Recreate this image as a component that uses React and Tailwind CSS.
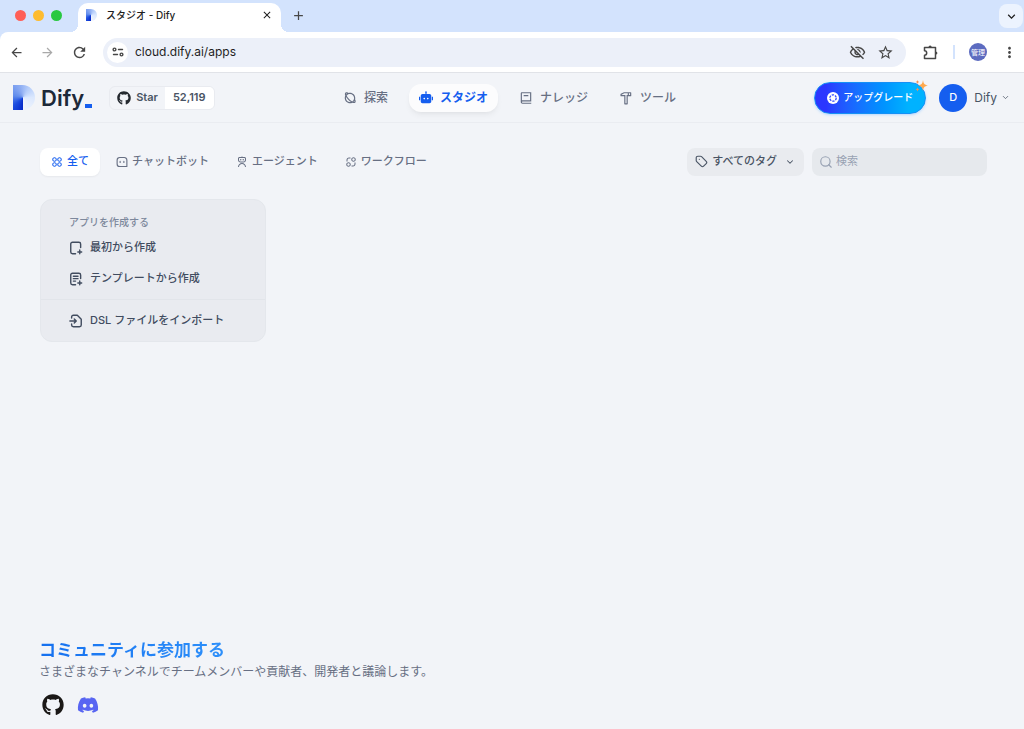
// src/App.jsx
import React, { useState } from "react";
import {
  MdArrowBack, MdArrowForward, MdRefresh, MdClose, MdAdd, MdKeyboardArrowDown,
  MdOutlineVisibilityOff, MdStarBorder, MdMoreVert,
} from "react-icons/md";
import { RiPlanetLine, RiRobot2Fill, RiBook2Line, RiHammerLine, RiApps2Line, RiRobot3Line, RiExchange2Line } from "react-icons/ri";
import { FaGithub, FaDiscord } from "react-icons/fa";
import { ChevronDown, Search } from "lucide-react";

const navItems = [
  { key: "explore", label: "探索", Icon: RiPlanetLine },
  { key: "studio", label: "スタジオ", Icon: RiRobot2Fill },
  { key: "datasets", label: "ナレッジ", Icon: RiBook2Line },
  { key: "tools", label: "ツール", Icon: RiHammerLine },
];

const tabs = [
  { key: "all", label: "全て", Icon: RiApps2Line },
  { key: "chat", label: "チャットボット", Icon: ChatIcon },
  { key: "agent", label: "エージェント", Icon: RiRobot3Line },
  { key: "workflow", label: "ワークフロー", Icon: RiExchange2Line },
];

export default function App() {
  return (
    <div className="flex min-h-screen flex-col bg-[#f2f4f8] font-['Inter','Noto_Sans_CJK_JP',sans-serif] text-[#495464]">
      <BrowserBar />
      <Header />
      <Apps />
      <Community />
    </div>
  );
}

function BrowserBar() {
  return (
    <div className="bg-[#d3e3fd] text-[#474747]">
      <div className="flex h-8 items-center">
        <div className="flex w-[78px] shrink-0 gap-[7px] pb-[2px] pl-[15px]">
          <span className="size-[11px] rounded-full bg-[#ff5f57]" />
          <span className="size-[11px] rounded-full bg-[#febc2e]" />
          <span className="size-[11px] rounded-full bg-[#28c840]" />
        </div>
        <div className="relative mt-[3px] flex h-[29px] w-[203px] items-center rounded-t-[10px] bg-white pb-[5px] pl-2 pr-2 text-[#1f1f1f]">
          <span className="absolute -left-2 bottom-0 size-2 bg-[radial-gradient(circle_at_0_0,#d3e3fd_8px,white_8px)]" />
          <span className="absolute -right-2 bottom-0 size-2 bg-[radial-gradient(circle_at_100%_0,#d3e3fd_8px,white_8px)]" />
          <LogoMark className="h-3 w-[11px]" />
          <span className="ml-[9px] flex-1 text-[10px] font-medium">スタジオ - Dify</span>
          <button aria-label="閉じる"><MdClose size={12} /></button>
        </div>
        <button aria-label="新しいタブ" className="ml-[10px] pb-[2px]"><MdAdd size={15} /></button>
        <button aria-label="タブを検索" className="ml-auto mr-[1px] flex size-6 items-center justify-center rounded-lg bg-[#ecf3fe] text-[#1f1f1f]">
          <MdKeyboardArrowDown size={15} />
        </button>
      </div>
      <div className="flex h-[41px] items-center rounded-tl-lg border-b border-[#e1e3e8] bg-white pl-[9px] pr-[6px]">
        <button aria-label="戻る"><MdArrowBack size={15} /></button>
        <button aria-label="進む" className="ml-4 text-[#a9a9a9]"><MdArrowForward size={15} /></button>
        <button aria-label="再読み込み" className="ml-4"><MdRefresh size={17} /></button>
        <div className="ml-[15px] flex h-[29px] flex-1 items-center rounded-full bg-[#ecf0f9] px-1">
          <span className="flex size-[21px] items-center justify-center rounded-full bg-white"><TuneIcon /></span>
          <input aria-label="アドレス" defaultValue="cloud.dify.ai/apps" className="ml-[7px] min-w-0 flex-1 bg-transparent text-[12px] text-[#1f1f1f] outline-none" />
          <button aria-label="Cookie"><MdOutlineVisibilityOff size={17} /></button>
          <button aria-label="ブックマーク" className="ml-[11px] mr-2"><MdStarBorder size={17} /></button>
        </div>
        <button aria-label="拡張機能" className="ml-4"><ExtensionIcon /></button>
        <span className="ml-[14px] h-[14px] w-[2px] bg-[#d3e3fd]" />
        <button className="ml-[14px] size-[18px] rounded-full bg-[#5c6bc0] text-[7px] leading-none text-white">管理</button>
        <button aria-label="メニュー" className="ml-[14px]"><MdMoreVert size={17} /></button>
      </div>
    </div>
  );
}

function Header() {
  const [active, setActive] = useState("studio");

  return (
    <header className="flex h-[50px] items-center border-b border-[#eaecf1] pl-[13px] pr-[14px]">
      <div className="flex flex-1 items-center">
        <a href="#" aria-label="Dify" className="flex items-center">
          <LogoMark className="h-[25px] w-[22px]" />
          <span className="ml-1.5 text-[22px] leading-none font-semibold text-[#1d2939]">Dify</span>
          <span className="ml-[1px] mt-4 h-1 w-[7px] bg-[#155eef]" />
        </a>
        <a href="#" className="ml-[17px] flex h-6 items-center overflow-hidden rounded-md border border-[#e9ebf0] text-[11px] font-semibold text-[#495464]">
          <span className="flex items-center gap-[5px] pl-[7px] pr-[7px]">
            <FaGithub size={14} className="text-[#24292f]" /> Star
          </span>
          <span className="flex h-full items-center bg-white px-2">52,119</span>
        </a>
      </div>

      <nav className="mr-1 flex items-center gap-[11px]">
        {navItems.map(({ key, label, Icon }) => (
          <button
            key={key}
            onClick={() => setActive(key)}
            className={`flex h-7 items-center gap-[7px] rounded-xl px-[10px] text-[12px] ${
              active === key ? "bg-[#fcfcfd] font-bold text-[#155eef] shadow-md shadow-black/5" : "font-medium text-[#676f83]"
            }`}
          >
            <Icon size={14} /> {label}
          </button>
        ))}
      </nav>

      <div className="flex flex-1 items-center justify-end">
        <button className="relative flex h-8 items-center gap-1 rounded-full border border-[#1590f5] bg-linear-to-r from-[#2b36ff] from-10% to-[#00b2ff] to-85% px-3 text-[10px] font-medium text-white shadow-sm shadow-blue-300/50">
          <BadgeIcon />
          アップグレード
          <Sparkles />
        </button>
        <button className="ml-[13px] flex items-center text-[12px] text-[#495464]">
          <span className="mr-[7px] flex size-7 items-center justify-center rounded-full bg-[#155eef] text-[11px] font-medium text-white">D</span>
          Dify
          <ChevronDown size={9} className="ml-1" />
        </button>
      </div>
    </header>
  );
}

function Apps() {
  const [tab, setTab] = useState("all");

  return (
    <main className="flex-1 pl-10 pr-[37px] pt-6">
      <div className="flex h-[29px] items-center justify-between">
        <div className="flex gap-[5px]">
          {tabs.map(({ key, label, Icon }) => (
            <button
              key={key}
              onClick={() => setTab(key)}
              className={`flex h-7 items-center gap-1 rounded-lg px-[11px] text-[11px] font-medium ${
                tab === key ? "bg-white text-[#155eef] shadow-xs" : "text-[#676f83]"
              }`}
            >
              <Icon size={12} /> {label}
            </button>
          ))}
        </div>
        <div className="flex items-center gap-2">
          <button className="flex h-7 items-center gap-1 rounded-lg bg-[#e9ebef] px-2 text-[11px] font-medium text-[#495464]">
            <TagIcon /> すべてのタグ <ChevronDown size={10} strokeWidth={2.5} className="ml-1 mr-[1px]" />
          </button>
          <label className="flex h-7 w-[175px] items-center gap-[3px] rounded-lg bg-[#e6e9ed] px-[7px] text-[#98a2b3]">
            <Search size={14} />
            <input aria-label="検索" placeholder="検索" className="min-w-0 flex-1 bg-transparent text-[11px] outline-none placeholder:text-[#98a2b3]" />
          </label>
        </div>
      </div>

      <div className="mt-[23px] grid grid-cols-4 gap-[14px]">
        <div className="rounded-xl border border-[#e4e7ec] bg-[#e9ebf0] text-[11px] font-medium">
          <div className="px-7 pb-[5px] pt-3">
            <p className="h-5 text-[10px] leading-5 text-[#7d889c]">アプリを作成する</p>
            <CreateItem icon={<BlankIcon />} label="最初から作成" />
            <CreateItem icon={<TemplateIcon />} label="テンプレートから作成" />
          </div>
          <div className="border-t border-[#e2e5ea] px-7 py-[5px]">
            <CreateItem icon={<ImportIcon />} label="DSL ファイルをインポート" />
          </div>
        </div>
      </div>
    </main>
  );
}

function CreateItem({ icon, label }) {
  return (
    <button className="flex h-[31px] w-full items-center gap-[7px] whitespace-nowrap text-left text-[#414c5f]">
      {icon} {label}
    </button>
  );
}

function Community() {
  return (
    <footer className="px-[39px] pb-[13px]">
      <h3 className="w-fit bg-linear-to-r from-[#1570ef] to-[#2e90fa] bg-clip-text text-[17px] leading-6 font-bold text-transparent">コミュニティに参加する</h3>
      <p className="text-[12px] leading-5 text-[#676f83]">さまざまなチャンネルでチームメンバーや貢献者、開発者と議論します。</p>
      <div className="mt-3 flex items-center gap-[13px] pl-[3px]">
        <a href="#" aria-label="GitHub"><FaGithub size={22} className="text-[#1b1817]" /></a>
        <a href="#" aria-label="Discord"><FaDiscord size={22} className="text-[#5865f2]" /></a>
      </div>
    </footer>
  );
}

/* ---- icons ---- */

function LogoMark({ className }) {
  return (
    <span
      className={`block rounded-r-full bg-[conic-gradient(from_180deg_at_46%_50%,#0528c8_0deg,#1d4ee0_50deg,#5f8bec_100deg,#8aaaf2_160deg,#b5cdfa_210deg,#dbe8fe_270deg,#f0f4fc_360deg)] ${className}`}
    />
  );
}

function ChatIcon({ size }) {
  return (
    <svg width={size} height={size} viewBox="0 0 16 16" fill="none" stroke="currentColor" strokeWidth="1.5" strokeLinejoin="round">
      <path d="M5 2h6a3.5 3.5 0 0 1 3.5 3.5V14H5a3.5 3.5 0 0 1-3.5-3.5v-5A3.5 3.5 0 0 1 5 2z" />
      <path d="M5.5 7.2v1.4M10.500 7.200v1.400" strokeLinecap="round" />
    </svg>
  );
}

function TagIcon() {
  return (
    <svg width="13" height="13" viewBox="0 0 16 16" fill="none" stroke="currentColor" strokeWidth="1.4" strokeLinecap="round" strokeLinejoin="round">
      <path d="M5.300 5.300h.01M1.500 3.500v3.200c0 .5.2 1 .6 1.400l5.700 5.700a2 2 0 0 0 2.800 0l3.200-3.200a2 2 0 0 0 0-2.800L8.100 2.100c-.4-.4-.9-.6-1.400-.6H3.500a2 2 0 0 0-2 2z" />
    </svg>
  );
}

function TuneIcon() {
  return (
    <svg width="12" height="12" viewBox="0 0 12 12" fill="none" stroke="currentColor" strokeWidth="1.4" strokeLinecap="round">
      <circle cx="2.5" cy="3.5" r="1.4" />
      <path d="M6.5 3.5h4M1.500 8.500h4" />
      <circle cx="9.500" cy="8.500" r="1.400" />
    </svg>
  );
}

function ExtensionIcon() {
  return (
    <svg width="17" height="17" viewBox="0 0 17 17" fill="none" stroke="currentColor" strokeWidth="1.5" strokeLinejoin="round">
      <path d="M2.500 3.500h11v11h-11v-3.300a2.200 2.200 0 0 0 0-4.400z" />
      <path d="M6.500 3.200a1.600 1.600 0 0 1 3.200 0zM13.800 7.400a1.600 1.600 0 0 1 0 3.200z" fill="currentColor" stroke="none" />
    </svg>
  );
}

function BadgeIcon() {
  return (
    <svg width="12" height="12" viewBox="0 0 12 12" fill="none">
      <circle cx="6" cy="6" r="6" fill="white" />
      <circle cx="6" cy="6" r="3.200" stroke="#3048ff" strokeWidth="1.300" strokeDasharray="2.300 1.050" />
      <path d="M6 4.600 7.300 6 6 7.400 4.700 6z" fill="white" />
    </svg>
  );
}

function BlankIcon() {
  return (
    <svg width="14" height="14" viewBox="0 0 16 16" fill="none" stroke="currentColor" strokeWidth="1.600" strokeLinecap="round" strokeLinejoin="round">
      <path d="M13.300 7.500V3.500a2 2 0 0 0-2-2H4a2 2 0 0 0-2 2v9a2 2 0 0 0 2 2h3.500" />
      <path d="M12.300 10.300v4.400M10.100 12.500h4.400" />
    </svg>
  );
}

function TemplateIcon() {
  return (
    <svg width="14" height="14" viewBox="0 0 16 16" fill="none" stroke="currentColor" strokeWidth="1.600" strokeLinecap="round" strokeLinejoin="round">
      <path d="M13.300 7.500V3.500a2 2 0 0 0-2-2H4a2 2 0 0 0-2 2v9a2 2 0 0 0 2 2h3.500" />
      <path d="M5 4.800h5.300M5 7.600h5.300M5 10.400h2.500" />
      <path d="M12.300 10.300v4.400M10.100 12.500h4.400" />
    </svg>
  );
}

function ImportIcon() {
  return (
    <svg width="14" height="14" viewBox="0 0 16 16" fill="none" stroke="currentColor" strokeWidth="1.600" strokeLinecap="round" strokeLinejoin="round">
      <path d="M3 4.500V3.500a2 2 0 0 1 2-2h4.500L14 6v6.500a2 2 0 0 1-2 2H5a2 2 0 0 1-2-2v-1" />
      <path d="M1 8h7M6 5.700 8.300 8 6 10.300" />
    </svg>
  );
}

function Sparkles() {
  return (
    <svg className="absolute -right-[3px] -top-[3px]" width="13" height="13" viewBox="0 0 13 13">
      <path d="M8 0c.6 4 1.500 4.700 5 5.500-3.500.8-4.400 1.500-5 5.500-.6-4-1.500-4.700-5-5.500C6.500 4.700 7.400 4 8 0z" fill="#ffa94d" />
      <path d="M2.500 0c.3 1.300.7 1.700 2 2-1.300.3-1.700.7-2 2-.3-1.300-.7-1.700-2-2 1.300-.3 1.700-.7 2-2zM2.500 7.500c.3 1.300.7 1.700 2 2-1.300.3-1.700.7-2 2-.3-1.300-.7-1.700-2-2 1.300-.3 1.700-.7 2-2z" fill="#f79051" />
    </svg>
  );
}
